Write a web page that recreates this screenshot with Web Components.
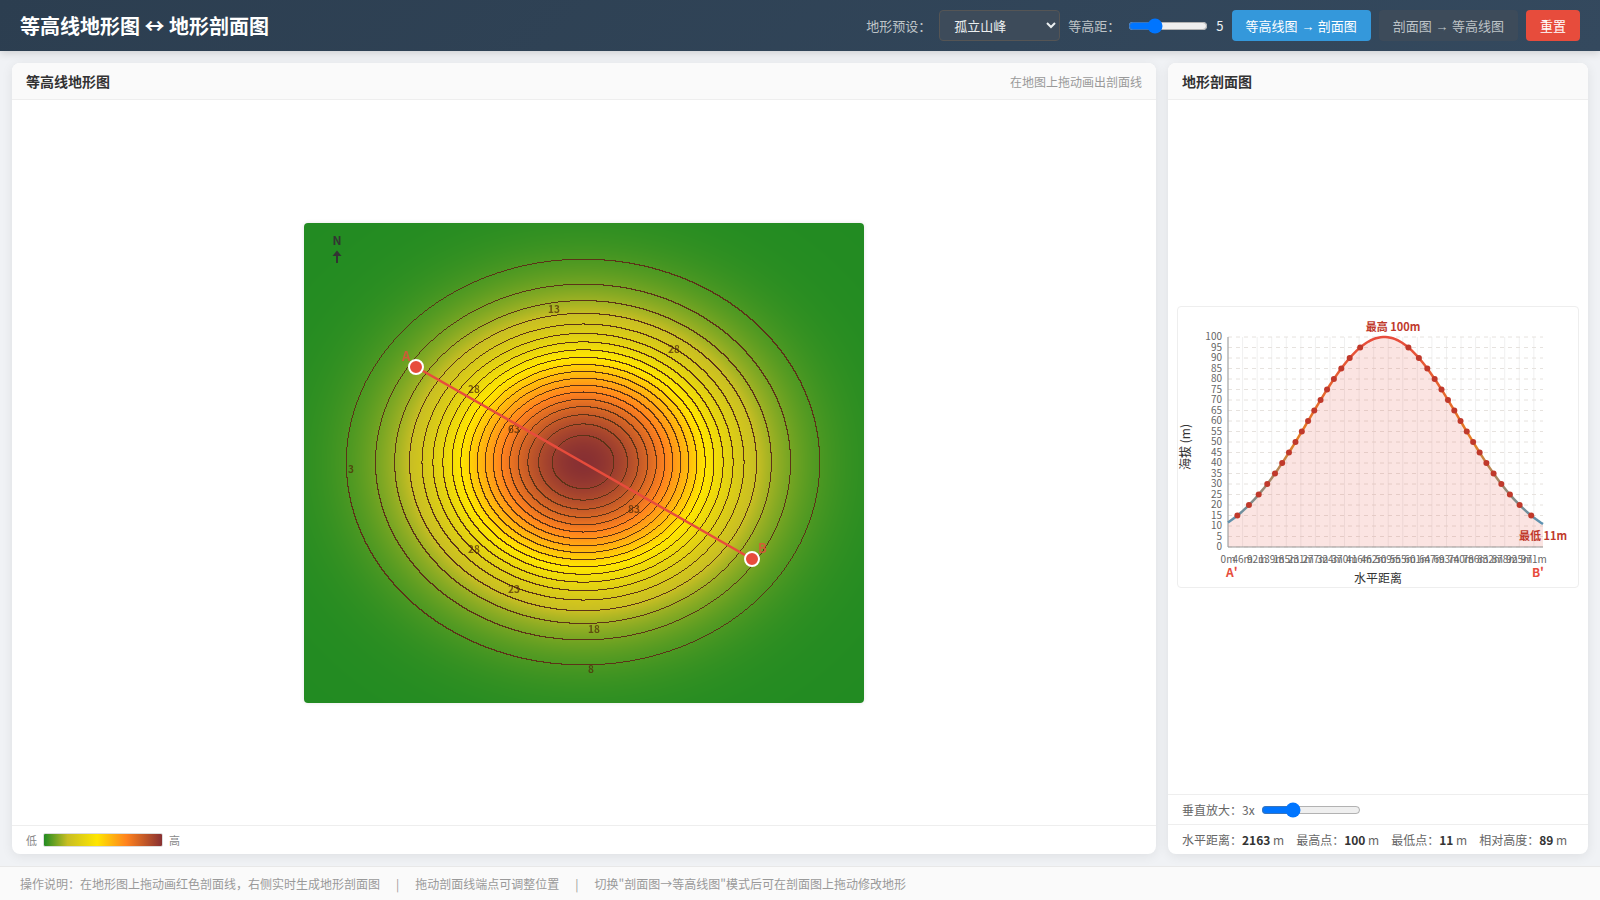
<!DOCTYPE html>
<html lang="zh-CN">
<head>
<meta charset="UTF-8">
<title>等高线地形图 ↔ 地形剖面图</title>
<style>
    body {
        margin: 0;
        background: #f0f2f5;
        color: #333;
        font-family: "Noto Sans CJK SC", sans-serif;
        font-size: 13px;
    }
</style>
</head>
<body>
<terrain-app></terrain-app>

<script>
// Elevation model: one isolated peak, coordinates are 0..1 over the map
const PEAK = { x: 0.5, y: 0.5, height: 100, spread: 16.77 };

function elevation(nx, ny) {
    const dx = nx - PEAK.x;
    const dy = ny - PEAK.y;
    return PEAK.height * Math.exp(-PEAK.spread * (dx * dx + dy * dy));
}

const COLOR_STOPS = [
    [0, [34, 139, 34]],
    [0.2, [200, 190, 35]],
    [0.45, [255, 230, 0]],
    [0.7, [255, 130, 30]],
    [1, [136, 48, 50]]
];

function heightColor(t) {
    for (let i = 1; i < COLOR_STOPS.length; i++) {
        const [t1, c1] = COLOR_STOPS[i];
        if (t <= t1) {
            const [t0, c0] = COLOR_STOPS[i - 1];
            const k = (t - t0) / (t1 - t0);
            return c0.map((v, n) => v + (c1[n] - v) * k);
        }
    }
    return COLOR_STOPS[COLOR_STOPS.length - 1][1];
}

function attach(el, html) {
    const template = document.createElement('template');
    template.innerHTML = html;
    el.attachShadow({ mode: 'open' });
    el.shadowRoot.appendChild(template.content.cloneNode(true));
}

class AppHeader extends HTMLElement {
    constructor() {
        super();
        attach(this, `
            <style>
                :host {
                    display: flex;
                    align-items: center;
                    justify-content: space-between;
                    padding: 10px 20px;
                    background: linear-gradient(135deg, #2c3e50, #34495e);
                    color: #fff;
                    box-shadow: 0 2px 8px rgba(0,0,0,0.15);
                    position: relative;
                }
                h1 {
                    margin: 0;
                    font-size: 20px;
                    font-weight: 600;
                }
                .controls {
                    display: flex;
                    align-items: center;
                    gap: 8px;
                }
            </style>
            <h1><slot name="title"></slot></h1>
            <div class="controls"><slot></slot></div>
        `);
    }
}
customElements.define('app-header', AppHeader);

class HeaderControls extends HTMLElement {
    constructor() {
        super();
        attach(this, `
            <style>
                :host {
                    display: flex;
                    align-items: center;
                    gap: 8px;
                    font-size: 13px;
                }
                label { color: #bdc3c7; }
                select {
                    font: inherit;
                    width: 121px;
                    padding: 4px 10px;
                    color: #ecf0f1;
                    background: #3d4b5a;
                    border: 1px solid #555;
                    border-radius: 4px;
                }
                input {
                    width: 80px;
                    margin: 0;
                }
                output { color: #ecf0f1; }
                button {
                    font: 13px "Liberation Sans", "Noto Sans CJK SC", sans-serif;
                    padding: 6px 14px;
                    border: none;
                    border-radius: 4px;
                    color: #bdc3c7;
                    background: #3d4b5a;
                    cursor: pointer;
                }
                button.active {
                    background: #3498db;
                    color: #fff;
                }
                button.danger {
                    background: #e74c3c;
                    color: #fff;
                }
            </style>
            <label for="preset">地形预设：</label>
            <select id="preset">
                <option>孤立山峰</option>
            </select>
            <label for="interval">等高距：</label>
            <input type="range" id="interval" min="1" max="15" value="5">
            <output for="interval">5</output>
            <button type="button" class="mode active">等高线图 → 剖面图</button>
            <button type="button" class="mode">剖面图 → 等高线图</button>
            <button type="button" class="danger">重置</button>
        `);
        const root = this.shadowRoot;
        const input = root.querySelector('input');
        input.addEventListener('input', () => this.setInterval(input.value));
        root.querySelector('.danger').addEventListener('click', () => {
            input.value = 5;
            this.setInterval(5);
        });
        root.querySelectorAll('.mode').forEach(btn => {
            btn.addEventListener('click', () => {
                root.querySelectorAll('.mode').forEach(b => b.classList.toggle('active', b === btn));
            });
        });
    }

    setInterval(value) {
        this.shadowRoot.querySelector('output').textContent = value;
        this.dispatchEvent(new CustomEvent('interval-change', { detail: Number(value), bubbles: true }));
    }
}
customElements.define('header-controls', HeaderControls);

class PanelCard extends HTMLElement {
    constructor() {
        super();
        attach(this, `
            <style>
                :host {
                    display: flex;
                    flex-direction: column;
                    min-width: 0;
                    background: #fff;
                    border-radius: 8px;
                    box-shadow: 0 2px 12px rgba(0,0,0,0.08);
                    overflow: hidden;
                }
                header {
                    display: flex;
                    align-items: center;
                    justify-content: space-between;
                    padding: 8px 14px;
                    background: #fafafa;
                    border-bottom: 1px solid #eee;
                }
                h2 {
                    margin: 0;
                    font-size: 14px;
                    line-height: 20px;
                    font-weight: 600;
                }
                .hint {
                    font-size: 12px;
                    line-height: 17px;
                    color: #999;
                }
                .body {
                    flex: 1;
                    display: flex;
                    align-items: center;
                    justify-content: center;
                    padding: 8px;
                }
            </style>
            <header>
                <h2><slot name="title"></slot></h2>
                <span class="hint"><slot name="hint"></slot></span>
            </header>
            <div class="body"><slot></slot></div>
            <slot name="footer"></slot>
        `);
    }
}
customElements.define('panel-card', PanelCard);

class ContourMap extends HTMLElement {
    constructor() {
        super();
        attach(this, `
            <style>
                :host {
                    display: block;
                    position: relative;
                    width: 560px;
                    max-width: 100%;
                    border-radius: 4px;
                    box-shadow: 0 0 4px rgba(0,0,0,0.1);
                    overflow: hidden;
                }
                canvas {
                    display: block;
                    width: 100%;
                }
                svg {
                    position: absolute;
                    inset: 0;
                    width: 100%;
                    height: 100%;
                }
                .level {
                    font-size: 10px;
                    font-weight: bold;
                    fill: rgba(80,45,10,0.75);
                }
                .north {
                    font-size: 12px;
                    font-weight: bold;
                    fill: #333;
                }
                .mark {
                    font-size: 13px;
                    font-weight: bold;
                    fill: #e74c3c;
                    fill-opacity: 0.8;
                }
                .cut {
                    stroke: #e74c3c;
                    stroke-width: 2.5;
                }
                .handle {
                    fill: #e74c3c;
                    stroke: #fff;
                    stroke-width: 2;
                    cursor: grab;
                }
            </style>
            <canvas width="560" height="480"></canvas>
            <svg viewBox="0 0 560 480">
                <g class="level">
                    <text x="244" y="90">13</text>
                    <text x="364" y="130">28</text>
                    <text x="164" y="170">28</text>
                    <text x="204" y="210">63</text>
                    <text x="44" y="250">3</text>
                    <text x="324" y="290">83</text>
                    <text x="164" y="330">28</text>
                    <text x="204" y="370">23</text>
                    <text x="284" y="410">18</text>
                    <text x="284" y="450">8</text>
                </g>
                <line class="cut" x1="112" y1="144" x2="448" y2="336"/>
                <circle class="handle" cx="112" cy="144" r="7"/>
                <circle class="handle" cx="448" cy="336" r="7"/>
                <text class="mark" x="98" y="138">A</text>
                <text class="mark" x="454" y="330">B</text>
                <text class="north" x="33" y="22" text-anchor="middle">N</text>
                <path d="M33 40V31" stroke="#333" stroke-width="2"/>
                <path d="M33 27.5L37.5 33H28.5Z" fill="#333"/>
            </svg>
        `);
    }

    connectedCallback() {
        this.draw(5);
    }

    draw(interval) {
        const canvas = this.shadowRoot.querySelector('canvas');
        const ctx = canvas.getContext('2d');
        const { width: w, height: h } = canvas;
        const image = ctx.createImageData(w, h);
        const at = (x, y) => elevation((x + 1) / w, (y + 1) / h);

        for (let y = 0; y < h; y++) {
            for (let x = 0; x < w; x++) {
                const z = at(x, y);
                const level = Math.floor(z / interval);
                const edge = level !== Math.floor(at(x + 1, y) / interval)
                    || level !== Math.floor(at(x, y + 1) / interval);
                const [r, g, b] = edge ? [92, 51, 23] : heightColor(z / 100);
                image.data.set([r, g, b, 255], (y * w + x) * 4);
            }
        }
        ctx.putImageData(image, 0, 0);
    }
}
customElements.define('contour-map', ContourMap);

class ColorLegend extends HTMLElement {
    constructor() {
        super();
        attach(this, `
            <style>
                :host {
                    display: flex;
                    align-items: center;
                    gap: 6px;
                    padding: 6px 14px;
                    border-top: 1px solid #eee;
                    font-size: 11px;
                    line-height: 16px;
                    color: #888;
                }
                .bar {
                    box-sizing: border-box;
                    width: 120px;
                    height: 14px;
                    border: 1px solid #ddd;
                    border-radius: 2px;
                    background: linear-gradient(90deg, #228b22, #c8be23 20%, #ffe600 45%, #ff821e 70%, #883032);
                }
            </style>
            <span>低</span>
            <div class="bar"></div>
            <span>高</span>
        `);
    }
}
customElements.define('color-legend', ColorLegend);

class ProfileChart extends HTMLElement {
    constructor() {
        super();
        attach(this, `
            <style>
                :host {
                    display: block;
                    width: 400px;
                    max-width: 100%;
                    border: 1px solid #eee;
                    border-radius: 4px;
                }
                svg {
                    display: block;
                    width: 100%;
                }
                .grid-x { stroke: #f0f0f0; }
                .grid-y { stroke: #e6e2de; stroke-dasharray: 4 4; }
                .axis { stroke: #999; fill: none; }
                .tick { font-size: 10px; fill: #666; }
                .title { font-size: 12px; fill: #333; }
                .end { font-size: 12px; font-weight: bold; fill: #e74c3c; }
                .extreme { font-size: 11px; font-weight: bold; fill: #c0392b; }
                .dot { fill: #c0392b; }
            </style>
            <svg viewBox="0 0 400 280"></svg>
        `);
    }

    connectedCallback() {
        this.draw(5);
    }

    draw(interval) {
        const left = 50, right = 365, top = 30, bottom = 240;
        const plotW = right - left;
        const distance = 2163;
        const samples = 130;
        const py = z => bottom - z * (bottom - top) / 100;
        const parts = [];

        for (let i = 0; i * 100 <= distance; i++) {
            const x = left + i * 100 / distance * plotW;
            parts.push(`<line class="grid-x" x1="${x}" y1="${top}" x2="${x}" y2="${bottom}"/>`);
            parts.push(`<text class="tick" x="${x}" y="256" text-anchor="middle">${Math.round(i * 100000 / distance)}m</text>`);
        }
        for (let z = 0; z <= 100; z += interval) {
            parts.push(`<line class="grid-y" x1="${left}" y1="${py(z)}" x2="${right}" y2="${py(z)}"/>`);
            parts.push(`<text class="tick" x="44" y="${py(z) + 3}" text-anchor="end">${z}</text>`);
        }

        // sample heights along A(0.2, 0.3) - B(0.8, 0.7)
        const pts = [];
        for (let i = 0; i <= samples; i++) {
            const s = (i + 0.5) / samples;
            pts.push([left + i / samples * plotW, elevation(0.2 + 0.6 * s, 0.3 + 0.4 * s)]);
        }
        const line = pts.map(([x, z], i) => `${i ? 'L' : 'M'}${x.toFixed(2)} ${py(z).toFixed(2)}`).join('');

        parts.push(`
            <defs>
                <linearGradient id="stroke" gradientUnits="userSpaceOnUse" x1="0" y1="${bottom}" x2="0" y2="${top}">
                    <stop offset="0" stop-color="#3498db"/>
                    <stop offset="0.5" stop-color="#e67e22"/>
                    <stop offset="1" stop-color="#e74c3c"/>
                </linearGradient>
            </defs>
            <path d="${line}V${bottom}H${left}Z" fill="#e74c3c" fill-opacity="0.15"/>
            <path class="axis" d="M${left} ${top}V${bottom}H${right}"/>
            <path d="${line}" fill="none" stroke="url(#stroke)" stroke-width="2.5"/>
        `);

        for (let i = 1; i < pts.length; i++) {
            const [x0, z0] = pts[i - 1];
            const [x1, z1] = pts[i];
            for (let z = interval; z < 100; z += interval) {
                if ((z0 - z) * (z1 - z) < 0) {
                    const x = x0 + (z - z0) / (z1 - z0) * (x1 - x0);
                    parts.push(`<circle class="dot" cx="${x}" cy="${py(z)}" r="3"/>`);
                }
            }
        }

        parts.push(`
            <text class="extreme" x="215" y="24" text-anchor="middle">最高 100m</text>
            <text class="extreme" x="365" y="233" text-anchor="middle">最低 11m</text>
            <text class="title" x="200" y="276" text-anchor="middle">水平距离</text>
            <text class="title" x="0" y="0" text-anchor="middle" transform="translate(12 140) rotate(-90)">海拔 (m)</text>
            <text class="end" x="48" y="270">A'</text>
            <text class="end" x="366" y="270" text-anchor="end">B'</text>
        `);
        this.shadowRoot.querySelector('svg').innerHTML = parts.join('');
    }
}
customElements.define('profile-chart', ProfileChart);

class ProfileInfo extends HTMLElement {
    constructor() {
        super();
        attach(this, `
            <style>
                :host {
                    display: block;
                    font-size: 12px;
                    line-height: 17px;
                    color: #666;
                }
                .row {
                    display: flex;
                    align-items: center;
                    padding: 6px 14px;
                    border-top: 1px solid #eee;
                }
                .zoom { gap: 6px; }
                .zoom input {
                    width: 100px;
                    height: 16px;
                    margin: 0;
                }
                .stats {
                    flex-wrap: wrap;
                    gap: 0 12px;
                }
                b { color: #333; }
            </style>
            <div class="row zoom">
                <label for="zoom">垂直放大：<output>3x</output></label>
                <input type="range" id="zoom" min="1" max="8" value="3">
            </div>
            <div class="row stats">
                <span>水平距离：<b>2163</b> m</span>
                <span>最高点：<b>100</b> m</span>
                <span>最低点：<b>11</b> m</span>
                <span>相对高度：<b>89</b> m</span>
            </div>
        `);
        const input = this.shadowRoot.querySelector('input');
        input.addEventListener('input', () => {
            this.shadowRoot.querySelector('output').textContent = input.value + 'x';
        });
    }
}
customElements.define('profile-info', ProfileInfo);

class HelpBar extends HTMLElement {
    constructor() {
        super();
        attach(this, `
            <style>
                :host {
                    display: flex;
                    gap: 16px;
                    padding: 8px 20px;
                    background: #fafafa;
                    border-top: 1px solid #e8e8e8;
                    font-size: 12px;
                    line-height: 17px;
                    color: #999;
                }
            </style>
            <slot></slot>
        `);
    }
}
customElements.define('help-bar', HelpBar);

class TerrainApp extends HTMLElement {
    constructor() {
        super();
        attach(this, `
            <style>
                :host {
                    display: flex;
                    flex-direction: column;
                    min-height: 100vh;
                }
                main {
                    flex: 1;
                    display: grid;
                    grid-template-columns: minmax(0, 1fr) 420px;
                    gap: 12px;
                    padding: 12px;
                }
            </style>
            <app-header>
                <span slot="title">等高线地形图 ↔ 地形剖面图</span>
                <header-controls></header-controls>
            </app-header>
            <main>
                <panel-card>
                    <span slot="title">等高线地形图</span>
                    <span slot="hint">在地图上拖动画出剖面线</span>
                    <contour-map></contour-map>
                    <color-legend slot="footer"></color-legend>
                </panel-card>
                <panel-card>
                    <span slot="title">地形剖面图</span>
                    <profile-chart></profile-chart>
                    <profile-info slot="footer"></profile-info>
                </panel-card>
            </main>
            <help-bar>
                <span>操作说明：在地形图上拖动画红色剖面线，右侧实时生成地形剖面图</span>
                <span>|</span>
                <span>拖动剖面线端点可调整位置</span>
                <span>|</span>
                <span>切换"剖面图→等高线图"模式后可在剖面图上拖动修改地形</span>
            </help-bar>
        `);
        this.shadowRoot.addEventListener('interval-change', e => {
            this.shadowRoot.querySelector('contour-map').draw(e.detail);
            this.shadowRoot.querySelector('profile-chart').draw(e.detail);
        });
    }
}
customElements.define('terrain-app', TerrainApp);
</script>
</body>
</html>
